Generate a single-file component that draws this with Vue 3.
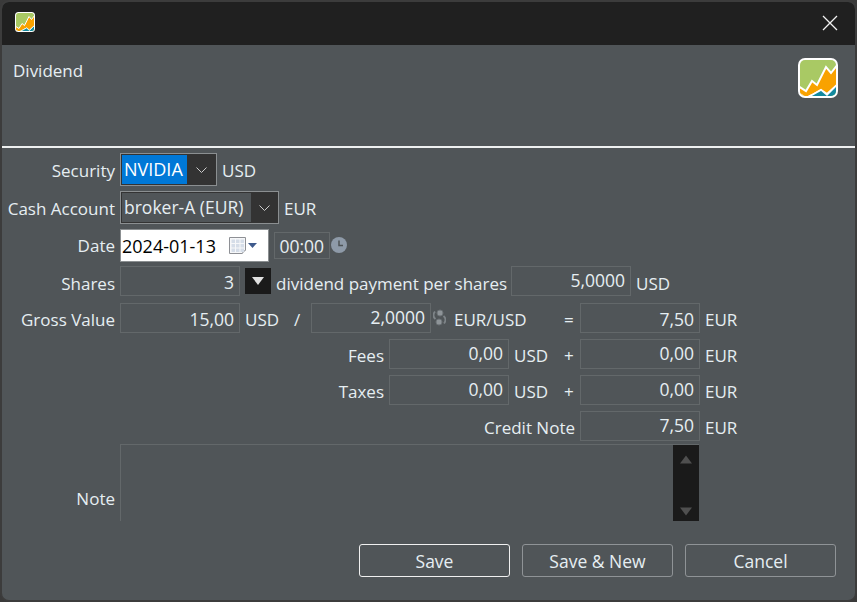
<script setup>
const chart = {
  orange: 'M0 28L8 33L14 23L19 27L28 9L33 15L40 6V26L29 36L23 32L14 37L8 40L0 35Z',
  teal: 'M8 40L14 37L23 32L29 37L40 26V40Z'
}
const cells = [2.5, 7, 11.5].flatMap((y) => [2.5, 7, 11.5].map((x) => ({ x, y })))
</script>

<template>
  <div class="window">
    <div class="titlebar">
      <svg class="app-small" viewBox="0 0 40 40">
        <defs><clipPath id="clip-small"><rect x="2" y="2" width="36" height="36" rx="5"/></clipPath></defs>
        <rect width="40" height="40" rx="7" fill="#fff"/>
        <g clip-path="url(#clip-small)">
          <rect width="40" height="40" fill="#a9c964"/>
          <path :d="chart.orange" fill="#f9a200" stroke="#fff" stroke-width="2"/>
          <path :d="chart.teal" fill="#13899f" stroke="#fff" stroke-width="1.500"/>
        </g>
      </svg>
      <svg class="close" viewBox="0 0 16 16"><path d="M1 1l14 14M15 1L1 15" stroke="#f2f2f2" stroke-width="1.300" fill="none"/></svg>
    </div>
    <div class="header">
      <span class="htitle">Dividend</span>
      <svg class="app-large" viewBox="0 0 40 40">
        <defs><clipPath id="clip-large"><rect x="2" y="2" width="36" height="36" rx="5"/></clipPath></defs>
        <rect width="40" height="40" rx="7" fill="#fff"/>
        <g clip-path="url(#clip-large)">
          <rect width="40" height="40" fill="#a9c964"/>
          <path :d="chart.orange" fill="#f9a200" stroke="#fff" stroke-width="2"/>
          <path :d="chart.teal" fill="#13899f" stroke="#fff" stroke-width="1.500"/>
        </g>
      </svg>
    </div>
    <div class="form">
      <div class="row r-security">
        <label class="lbl w-main">Security</label>
        <div class="combo c-sec"><span class="sel">NVIDIA</span><span class="chev"><svg viewBox="0 0 11 6"><path d="M.5.5l5 5 5-5" fill="none" stroke="#ccc"/></svg></span></div>
        <span class="txt ml5">USD</span>
      </div>
      <div class="row r-cash">
        <label class="lbl w-main">Cash Account</label>
        <div class="combo c-cash"><span class="val">broker-A (EUR)</span><span class="chev"><svg viewBox="0 0 11 6"><path d="M.5.5l5 5 5-5" fill="none" stroke="#ccc"/></svg></span></div>
        <span class="txt ml5">EUR</span>
      </div>
      <div class="row r-date">
        <label class="lbl w-main">Date</label>
        <div class="date">
          <span>2024-01-13</span>
          <svg class="cal" viewBox="0 0 28 18">
            <path d="M.5.5h16v13l-3 3H.5z" fill="#f6f7f9" stroke="#8e9095"/>
            <path d="M16.500 13.500h-3v3" fill="#fff" stroke="#b5b7bb"/>
            <rect v-for="(c, i) in cells" :key="i" :x="c.x" :y="c.y" width="3.500" height="3.500" fill="#d5dde8"/>
            <path d="M19 6h9l-4.500 5z" fill="#3e5a8c"/>
          </svg>
        </div>
        <div class="box time">00:00</div>
        <svg class="clock" viewBox="0 0 16 16"><circle cx="8" cy="8" r="8" fill="#8e9aa8"/><path d="M8 3.500v5h4" fill="none" stroke="#4e5356" stroke-width="1.500"/></svg>
      </div>
      <div class="row r-shares">
        <label class="lbl w-main">Shares</label>
        <div class="box w120 low">3</div>
        <div class="dropbtn"><i></i></div>
        <span class="txt ml5 w-div">dividend payment per shares</span>
        <div class="box w120 ml5">5,0000</div>
        <span class="txt ml5">USD</span>
      </div>
      <div class="row r-gross">
        <label class="lbl w-main">Gross Value</label>
        <div class="box w120 low">15,00</div>
        <span class="txt ml5 w-usd-g">USD</span>
        <span class="txt slash">/</span>
        <div class="box w120">2,0000</div>
        <svg class="swap" viewBox="0 0 13 17">
          <circle cx="7" cy="4" r="3" fill="#8e9498" stroke="#6c7276"/>
          <circle cx="6" cy="13" r="3" fill="#8e9498" stroke="#6c7276"/>
          <path d="M2 2.500C0 5 0 8 2.500 10M11 14.500C13 12 13 9 10.500 7" fill="none" stroke="#7e8488" stroke-width="1.800"/>
        </svg>
        <span class="txt pair">EUR/USD</span>
        <span class="txt eq">=</span>
        <div class="box w120 low">7,50</div>
        <span class="txt ml5">EUR</span>
      </div>
      <div class="row r-fees">
        <label class="lbl w-wide">Fees</label>
        <div class="box w120">0,00</div>
        <span class="txt ml5 w-usd">USD</span>
        <span class="txt plus">+</span>
        <div class="box w120">0,00</div>
        <span class="txt ml5">EUR</span>
      </div>
      <div class="row r-taxes">
        <label class="lbl w-wide">Taxes</label>
        <div class="box w120">0,00</div>
        <span class="txt ml5 w-usd">USD</span>
        <span class="txt plus">+</span>
        <div class="box w120">0,00</div>
        <span class="txt ml5">EUR</span>
      </div>
      <div class="row r-credit">
        <label class="lbl w-credit">Credit Note</label>
        <div class="box w120">7,50</div>
        <span class="txt ml5">EUR</span>
      </div>
      <div class="row r-note">
        <label class="lbl w-main note-lbl">Note</label>
        <div class="note">
          <div class="scroll">
            <svg viewBox="0 0 12 8"><path d="M6 0l6 8H0z" fill="#4f4f4f"/></svg>
            <svg viewBox="0 0 12 8"><path d="M6 8L0 0h12z" fill="#4f4f4f"/></svg>
          </div>
        </div>
      </div>
    </div>
    <div class="buttons">
      <button class="btn primary">Save</button>
      <button class="btn">Save &amp; New</button>
      <button class="btn">Cancel</button>
    </div>
  </div>
</template>

<style>
html, body { margin: 0; background: #3a3a3a; }
</style>

<style scoped>
.window {
  box-sizing: border-box;
  width: 857px;
  height: 602px;
  display: flex;
  flex-direction: column;
  background: #505558;
  border: 2px solid #3c3c3c;
  border-radius: 9px;
  overflow: hidden;
  font-family: "Open Sans", "Noto Sans", sans-serif;
  font-size: 17px;
  color: #e6eef2;
}
.titlebar {
  flex: 0 0 43px;
  background: #202020;
  display: flex;
  align-items: center;
  justify-content: space-between;
  padding: 0 17px 0 13px;
}
.app-small { width: 20px; height: 20px; margin-top: -3px; }
.close { width: 16px; height: 16px; margin-top: -1px; }
.header {
  flex: 0 0 103px;
  display: flex;
  justify-content: space-between;
  box-sizing: border-box;
  border-bottom: 2px solid #eef0f0;
  padding: 15px 17px 0 11px;
}
.htitle { line-height: 21px; }
.app-large { width: 40px; height: 40px; margin-top: -2px; }
.form { flex: 1 1 auto; display: flex; flex-direction: column; padding-top: 5px; }
.row { display: flex; align-items: center; }
.r-security, .r-cash, .r-date { height: 33px; margin-bottom: 5px; }
.r-date { margin-bottom: 4px; }
.r-shares { height: 30px; margin-bottom: 7px; }
.r-gross { height: 30px; margin-bottom: 6px; }
.r-fees, .r-taxes { height: 30px; margin-bottom: 6px; }
.r-credit { height: 30px; margin-bottom: 3px; }
.r-note { height: 77px; align-items: center; }
.lbl { flex: none; text-align: right; margin-right: 5px; white-space: nowrap; padding-top: 2px; }
.txt { white-space: nowrap; flex: none; padding-top: 2px; }
.r-date .lbl { padding-top: 0; }
.r-shares .lbl, .r-shares .txt { padding-top: 4px; }
.w-main { width: 113px; }
.w-wide { width: 382px; }
.w-credit { width: 573px; }
.note-lbl { margin-top: 31px; padding-top: 0; }
.ml5 { margin-left: 5px; }
.w-div { width: 230px; }
.w-usd-g { width: 49px; }
.w-usd { width: 50px; }
.combo {
  box-sizing: border-box;
  height: 33px;
  flex: none;
  display: flex;
  border: 1px solid #8b8f91;
  background: #333;
  padding: 1px;
  line-height: 29px;
}
.c-sec { width: 97px; }
.c-cash { width: 159px; }
.sel { background: #0078d7; color: #fff; flex: 0 0 65px; padding-left: 2px; box-sizing: border-box; font-size: 18px; }
.val { background: #505558; flex: 0 0 129px; padding-left: 2px; box-sizing: border-box; font-size: 17.500px; white-space: nowrap; }
.chev { flex: 1; display: flex; align-items: center; justify-content: center; }
.chev svg { width: 11px; height: 6px; }
.date {
  box-sizing: border-box;
  width: 149px;
  height: 33px;
  flex: none;
  background: #fff;
  color: #000;
  font-size: 18px;
  display: flex;
  align-items: center;
  justify-content: space-between;
  padding: 0 11px 0 1px;
  border: 1px solid #8b8f91;
}
.cal { width: 28px; height: 18px; }
.box {
  box-sizing: border-box;
  height: 30px;
  flex: none;
  border: 1px solid #63686a;
  text-align: right;
  line-height: 26px;
  padding-right: 5px;
  font-size: 17.500px;
}
.low { line-height: 30px; }
.w120 { width: 120px; }
.time { width: 56px; margin-left: 5px; padding-right: 5px; height: 27px; line-height: 27px; }
.clock { width: 16px; height: 16px; margin-left: 1px; margin-top: -2px; flex: none; }
.dropbtn {
  flex: none;
  width: 26px;
  height: 26px;
  margin-left: 5px;
  background: #1a1a1a;
  display: flex;
  align-items: center;
  justify-content: center;
}
.dropbtn i {
  width: 0;
  height: 0;
  border-left: 6px solid transparent;
  border-right: 6px solid transparent;
  border-top: 8px solid #e0e0e0;
}
.slash { width: 17px; }
.swap { flex: none; width: 13px; height: 17px; margin-left: 2px; margin-top: -1px; }
.pair { margin-left: 8px; width: 110px; }
.eq { width: 16px; }
.plus { width: 16px; }
.note {
  box-sizing: border-box;
  width: 579px;
  height: 77px;
  flex: none;
  border-top: 1px solid #63686a;
  border-left: 1px solid #63686a;
  display: flex;
  justify-content: flex-end;
}
.scroll {
  width: 26px;
  height: 76px;
  background: #1a1a1a;
  display: flex;
  flex-direction: column;
  justify-content: space-between;
  align-items: center;
  padding: 10px 0 5px;
  box-sizing: border-box;
}
.scroll svg { width: 12px; height: 9px; }
.buttons { display: flex; justify-content: flex-end; gap: 12px; padding: 0 19px 23px 0; }
.btn {
  box-sizing: border-box;
  width: 151px;
  height: 33px;
  background: transparent;
  border: 1px solid #8f9396;
  border-radius: 3px;
  color: #e6eef2;
  font: inherit;
  font-size: 17.500px;
  padding: 0;
}
.primary { border-color: #f0f0f0; }
</style>
